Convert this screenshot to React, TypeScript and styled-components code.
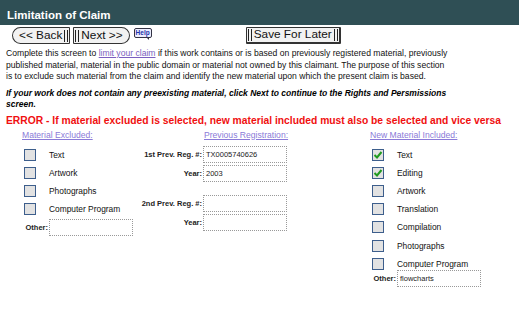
import React from 'react';
import styled, { createGlobalStyle } from 'styled-components';

const GlobalStyle = createGlobalStyle`
  body {
    margin: 0;
    background: #fff;
    font-family: "Liberation Sans", Arial, sans-serif;
    color: #000;
  }
`;

const TitleBar = styled.div`
  height: 25px;
  background: #2f4f55;
  color: #fff;
  font-weight: bold;
  font-size: 11.5px;
  padding-left: 7px;
  display: flex;
  align-items: center;
  padding-top: 5px;
  box-sizing: border-box;
`;

const Toolbar = styled.div`
  display: flex;
  align-items: center;
  height: 19px;
  margin-top: 1px;
  padding-left: 12px;
`;

const NavButton = styled.button<{ $side: 'left' | 'right' | 'both' }>`
  height: 17px;
  padding: ${(p) => (p.$side === 'left' ? '0 1px 0 6px' : p.$side === 'right' ? '0 6px 0 1px' : '0 1px')};
  margin-right: 3px;
  border: 1px solid #333;
  border-width: ${(p) => (p.$side === 'both' ? '1px 2px 2px 1px' : '1px')};
  border-radius: ${(p) =>
    p.$side === 'left' ? '9px 1px 1px 9px' : p.$side === 'right' ? '1px 9px 9px 1px' : '1px'};
  background: #f2f2f2;
  font-family: "Liberation Sans", Arial, sans-serif;
  font-size: 11.8px;
  color: #111;
  display: flex;
  align-items: center;
  gap: 2px;
  line-height: 1;
`;

const Bars = styled.span`
  display: inline-block;
  width: 4px;
  height: 12px;
  border-left: 1px solid #222;
  border-right: 1px solid #222;
  box-sizing: border-box;
`;

const HelpBadge = styled.span`
  position: relative;
  display: inline-block;
  font-size: 6.5px;
  font-weight: bold;
  color: #2233aa;
  border: 1px solid #334;
  border-radius: 2px;
  padding: 0 1px;
  line-height: 8px;
  margin-left: 1px;
  margin-top: -6px;
  background: #eef;
  &::after {
    content: '';
    position: absolute;
    right: 2px;
    bottom: -3px;
    border-left: 3px solid transparent;
    border-top: 3px solid #334;
  }
`;

const Spacer = styled.div<{ $w: number }>`
  width: ${(p) => p.$w}px;
`;

const Intro = styled.p`
  margin: 3px 0 0;
  padding: 0 6px;
  font-size: 8.6px;
  line-height: 11.5px;
  color: #111;
  width: 444px;
`;

const Link = styled.a`
  color: #7a5fc0;
`;

const Note = styled.p`
  margin: 5px 0 0;
  padding: 0 6px;
  font-size: 8.5px;
  line-height: 11.5px;
  font-weight: bold;
  font-style: italic;
  width: 446px;
`;

const ErrorLine = styled.div`
  padding: 0 6px;
  margin-top: 3px;
  color: #f01010;
  font-weight: bold;
  font-size: 10.3px;
  line-height: 14px;
  white-space: nowrap;
`;

const Columns = styled.div`
  display: grid;
  grid-template-columns: 136px 234px 1fr;
  margin-top: 1px;
`;

const Column = styled.div<{ $pad: number }>`
  padding-left: ${(p) => p.$pad}px;
`;

const Heading = styled.div<{ $indent?: number }>`
  font-size: 8.6px;
  color: #8a7ad8;
  text-decoration: underline;
  margin-left: ${(p) => p.$indent ?? 0}px;
  height: 17px;
  line-height: 12px;
`;

const CheckRow = styled.label`
  display: flex;
  align-items: center;
  height: 18.2px;
  font-size: 8.4px;
  color: #111;
  padding-left: 2px;
`;

const Box = styled.span`
  width: 10px;
  height: 10px;
  border: 1px solid #3d5e8c;
  background: #e2e2e2;
  margin-right: 13px;
  position: relative;
  flex: none;
  svg {
    position: absolute;
    left: 0px;
    top: 0px;
  }
`;

const OtherRow = styled.div<{ $offset?: number }>`
  display: flex;
  align-items: center;
  height: 18px;
  margin-top: ${(p) => p.$offset ?? 0}px;
`;

const SmallLabel = styled.span<{ $w?: number }>`
  font-size: 7.5px;
  font-weight: bold;
  color: #222;
  width: ${(p) => (p.$w ? `${p.$w}px` : 'auto')};
  text-align: right;
  padding-right: 1px;
  flex: none;
`;

const TextInput = styled.div`
  width: 84px;
  height: 17px;
  box-sizing: border-box;
  border: 1px dotted #999;
  font-size: 7.5px;
  padding-left: 2px;
  display: flex;
  align-items: center;
  color: #222;
`;

const RegGrid = styled.div`
  display: grid;
  grid-template-columns: 67px 84px;
  align-items: center;
  row-gap: 2px;
`;

const Gap = styled.div`
  grid-column: 1 / span 2;
  height: 9px;
`;

const Check = () => (
  <svg width="10" height="10" viewBox="0 0 10 10">
    <path d="M1.5 5 L4 7.5 L8.5 2" stroke="#1f9a1f" strokeWidth="2" fill="none" />
  </svg>
);

const CheckItem = ({ label, checked }: { label: string; checked?: boolean }) => (
  <CheckRow>
    <Box>{checked && <Check />}</Box>
    {label}
  </CheckRow>
);

const excluded = ['Text', 'Artwork', 'Photographs', 'Computer Program'];
const included: [string, boolean][] = [
  ['Text', true],
  ['Editing', true],
  ['Artwork', false],
  ['Translation', false],
  ['Compilation', false],
  ['Photographs', false],
  ['Computer Program', false],
];

export default function App() {
  return (
    <>
      <GlobalStyle />
      <TitleBar>Limitation of Claim</TitleBar>
      <Toolbar>
        <NavButton $side="left">
          &lt;&lt; Back <Bars />
        </NavButton>
        <NavButton $side="right">
          <Bars /> Next &gt;&gt;
        </NavButton>
        <HelpBadge>Help</HelpBadge>
        <Spacer $w={94} />
        <NavButton $side="both">
          <Bars /> Save For Later <Bars />
        </NavButton>
      </Toolbar>
      <Intro>
        Complete this screen to <Link href="#">limit your claim</Link> if this work contains or is
        based on previously registered material, previously published material, material in the
        public domain or material not owned by this claimant. The purpose of this section is to
        exclude such material from the claim and identify the new material upon which the present
        claim is based.
      </Intro>
      <Note>
        If your work does not contain any preexisting material, click Next to continue to the Rights
        and Persmissions screen.
      </Note>
      <ErrorLine>
        ERROR - If material excluded is selected, new material included must also be selected and
        vice versa
      </ErrorLine>
      <Columns>
        <Column $pad={22}>
          <Heading>Material Excluded:</Heading>
          {excluded.map((l) => (
            <CheckItem key={l} label={l} />
          ))}
          <OtherRow>
            <SmallLabel $w={26}>Other:</SmallLabel>
            <TextInput />
          </OtherRow>
        </Column>
        <Column $pad={0}>
          <Heading $indent={68}>Previous Registration:</Heading>
          <RegGrid>
            <SmallLabel>1st Prev. Reg. #:</SmallLabel>
            <TextInput>TX0005740626</TextInput>
            <SmallLabel>Year:</SmallLabel>
            <TextInput>2003</TextInput>
            <Gap />
            <SmallLabel>2nd Prev. Reg. #:</SmallLabel>
            <TextInput />
            <SmallLabel>Year:</SmallLabel>
            <TextInput />
          </RegGrid>
        </Column>
        <Column $pad={0}>
          <Heading>New Material Included:</Heading>
          {included.map(([l, c]) => (
            <CheckItem key={l} label={l} checked={c} />
          ))}
          <OtherRow $offset={-3}>
            <SmallLabel $w={26}>Other:</SmallLabel>
            <TextInput>flowcharts</TextInput>
          </OtherRow>
        </Column>
      </Columns>
    </>
  );
}
